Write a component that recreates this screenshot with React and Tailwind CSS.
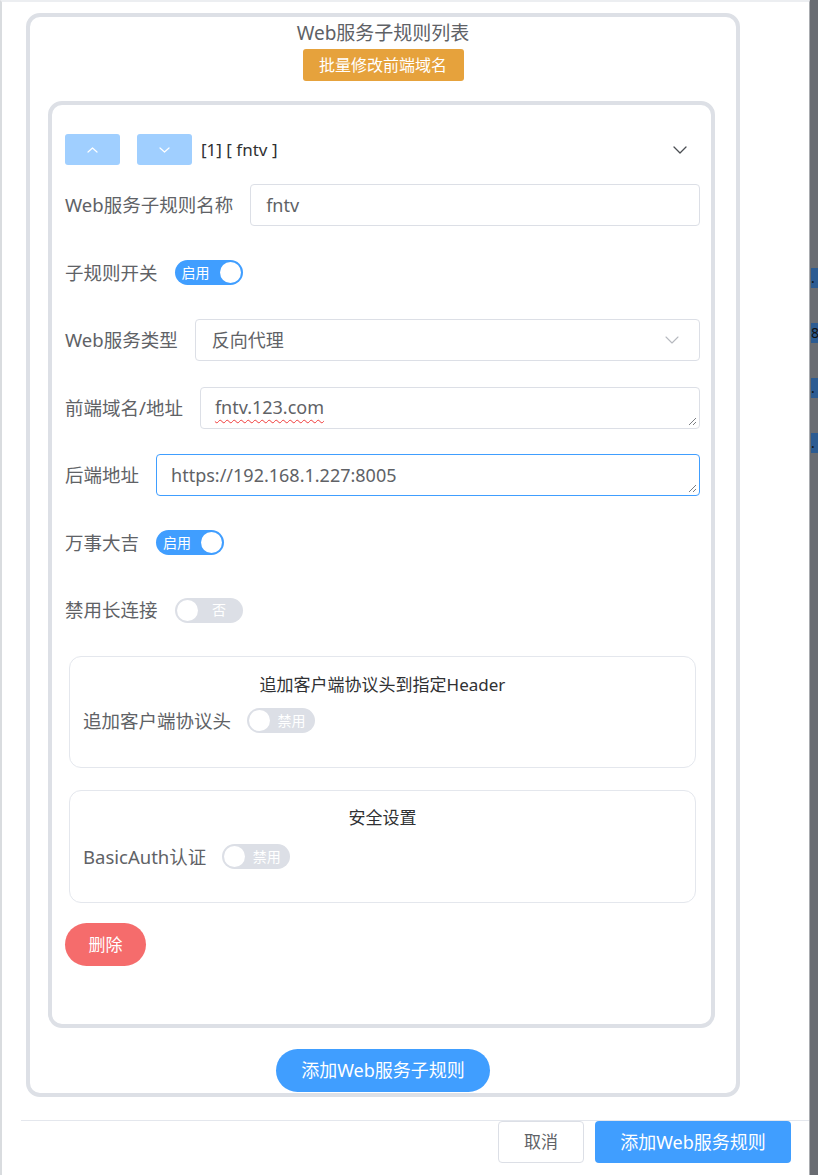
const FONT = { fontFamily: '"Noto Sans", "Noto Sans CJK SC", sans-serif' }

function Chevron({ dir = 'down', className = '', color = '#606266', w = 12, h = 7, sw = 1.3 }) {
  const pts = dir === 'down' ? `1,1 ${w / 2},${h - 1} ${w - 1},1` : `1,${h - 1} ${w / 2},1 ${w - 1},${h - 1}`
  return (
    <svg width={w} height={h} viewBox={`0 0 ${w} ${h}`} className={className}>
      <polyline points={pts} fill="none" stroke={color} strokeWidth={sw} strokeLinecap="round" strokeLinejoin="round" />
    </svg>
  )
}

function ResizeGrip() {
  return (
    <svg width="9" height="9" viewBox="0 0 9 9" className="absolute right-[2px] bottom-[2px]">
      <line x1="8" y1="1" x2="1" y2="8" stroke="#7a7d82" strokeWidth="1" />
      <line x1="8" y1="5" x2="5" y2="8" stroke="#7a7d82" strokeWidth="1" />
    </svg>
  )
}

function Toggle({ on, text }) {
  if (on) {
    return (
      <div className="w-[68px] h-[25px] rounded-full bg-[#409eff] flex items-center justify-between pl-[7px] pr-[2px]">
        <span className="text-[14px] leading-none text-white">{text}</span>
        <span className="w-[21px] h-[21px] rounded-full bg-white" />
      </div>
    )
  }
  return (
    <div className="w-[68px] h-[25px] rounded-full bg-[#dcdfe6] flex items-center pl-[2px] pr-[8px] gap-[6px]">
      <span className="w-[21px] h-[21px] rounded-full bg-white" />
      <span className="flex-1 text-center text-[14px] leading-none text-white">{text}</span>
    </div>
  )
}

function Row({ label, children }) {
  return (
    <div className="flex items-center h-[42px] gap-[17px]">
      <span className="text-[18.5px] text-[#606266] whitespace-nowrap">{label}</span>
      {children}
    </div>
  )
}

export default function App() {
  return (
    <div className="relative w-[818px] h-[1175px] bg-white border-r-[8px] border-r-[#696c72]" style={FONT}>
      {/* Dialog body */}
      <div className="w-full h-full overflow-hidden border-t-2 border-l-2 border-r border-t-[#eceef1] border-l-[#d9dcdf] border-r-[#a9acb0] flex flex-col">
        {/* Outer card */}
        <div className="ml-[24px] mt-[11px] w-[714px] border-4 border-[#dde0e6] rounded-[14px] flex flex-col items-center">
          <h1 className="text-[19px] leading-[28px] text-[#5e6166] mt-[2px]">Web服务子规则列表</h1>
          <button className="mt-[2px] w-[161px] h-[32px] rounded-[3px] bg-[#e6a23c] text-white text-[16px]">
            批量修改前端域名
          </button>

          {/* Inner card */}
          <div className="self-start ml-[18px] mt-[20px] w-[667px] h-[927px] border-4 border-[#dde0e6] rounded-[14px] pl-[13px] pr-[11px] pt-[29px]">
            {/* Header */}
            <div className="flex items-center h-[31px]">
              <button className="w-[55px] h-[31px] rounded-[3px] bg-[#a0cfff] flex items-center justify-center">
                <Chevron dir="up" color="#ffffff" w={11} h={6} sw={1.2} />
              </button>
              <button className="ml-[17px] w-[55px] h-[31px] rounded-[3px] bg-[#a0cfff] flex items-center justify-center">
                <Chevron dir="down" color="#ffffff" w={11} h={6} sw={1.2} />
              </button>
              <span className="ml-[9px] text-[17px] text-[#303133]">[1] [ fntv ]</span>
              <Chevron className="ml-auto mr-[13px]" color="#4b4e53" w={14} h={8} />
            </div>

            <div className="mt-[19px] flex flex-col gap-[25.5px]">
              <Row label="Web服务子规则名称">
                <div className="flex-1 h-[42px] border border-[#dcdfe6] rounded-[4px] px-[15px] flex items-center text-[18px] text-[#606266]">
                  fntv
                </div>
              </Row>
              <Row label="子规则开关">
                <Toggle on text="启用" />
              </Row>
              <Row label="Web服务类型">
                <div className="flex-1 h-[42px] border border-[#dcdfe6] rounded-[4px] pl-[16px] pr-[20px] flex items-center justify-between text-[18px] text-[#606266]">
                  <span>反向代理</span>
                  <Chevron color="#b6b9bf" w={14} h={8} sw={1.1} />
                </div>
              </Row>
              <Row label="前端域名/地址">
                <div className="relative flex-1 h-[42px] border border-[#dcdfe6] rounded-[4px] px-[14px] flex items-center text-[18px] text-[#606266]">
                  <span className="underline decoration-wavy decoration-[#f03a3a] decoration-1 underline-offset-[5px]">fntv.123.com</span>
                  <ResizeGrip />
                </div>
              </Row>
              <Row label="后端地址">
                <div className="relative flex-1 h-[42px] border border-[#409eff] rounded-[4px] px-[14px] flex items-center text-[18px] text-[#606266]">
                  https://192.168.1.227:8005
                  <ResizeGrip />
                </div>
              </Row>
              <Row label="万事大吉">
                <Toggle on text="启用" />
              </Row>
              <Row label="禁用长连接">
                <Toggle text="否" />
              </Row>
            </div>

            {/* Section: header */}
            <div className="mt-[25px] mx-[4px] h-[112px] border border-[#e4e7ed] rounded-[12px] px-[13px] pt-[16px]">
              <div className="text-center text-[17px] leading-[24px] text-[#303133]">追加客户端协议头到指定Header</div>
              <div className="mt-[10px] flex items-center gap-[16px]">
                <span className="text-[18.5px] text-[#606266]">追加客户端协议头</span>
                <Toggle text="禁用" />
              </div>
            </div>

            {/* Section: security */}
            <div className="mt-[22px] mx-[4px] h-[113px] border border-[#e4e7ed] rounded-[12px] px-[13px] pt-[15px]">
              <div className="text-center text-[17px] leading-[24px] text-[#303133]">安全设置</div>
              <div className="mt-[13px] flex items-center gap-[16px]">
                <span className="text-[18.5px] text-[#606266]">BasicAuth认证</span>
                <Toggle text="禁用" />
              </div>
            </div>

            <button className="mt-[20px] w-[81px] h-[43px] rounded-full bg-[#f56c6c] text-white text-[17px]">删除</button>
          </div>

          <button className="mt-[21px] mb-[1px] w-[214px] h-[43px] rounded-full bg-[#409eff] text-white text-[18px]">
            添加Web服务子规则
          </button>
        </div>

        {/* Footer */}
        <div className="mt-[23px] ml-[19px] border-t border-[#e4e7ed] flex justify-end gap-[11px] pr-[18px]">
          <button className="w-[86px] h-[42px] border border-[#dcdfe6] rounded-[4px] text-[17px] text-[#606266] bg-white">取消</button>
          <button className="w-[196px] h-[42px] rounded-[4px] bg-[#409eff] text-white text-[18px]">添加Web服务规则</button>
        </div>
      </div>

      {/* Bits of the dimmed page peeking out on the right */}
      <div className="absolute top-[268px] -right-[8px] w-[7px] h-[20px] bg-[#2c5b92] overflow-hidden text-[14px] leading-[20px] text-[#111]">.</div>
      <div className="absolute top-[323px] -right-[8px] w-[7px] h-[20px] bg-[#2c5b92] overflow-hidden text-[14px] leading-[20px] text-[#111]">8</div>
      <div className="absolute top-[378px] -right-[8px] w-[7px] h-[20px] bg-[#2c5b92] overflow-hidden text-[14px] leading-[20px] text-[#111]">.</div>
      <div className="absolute top-[433px] -right-[8px] w-[7px] h-[20px] bg-[#2c5b92] overflow-hidden text-[14px] leading-[20px] text-[#111]">.</div>
    </div>
  )
}
